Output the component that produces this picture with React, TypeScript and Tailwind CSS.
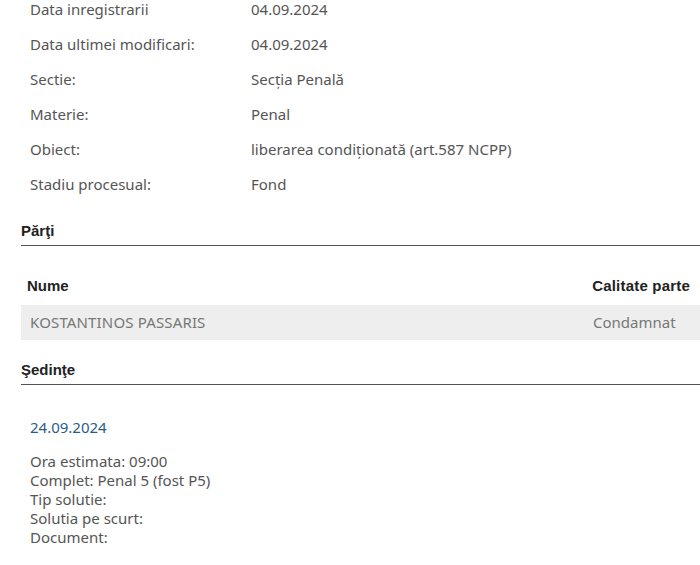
import React from "react";

const rows: [string, string][] = [
  ["Data inregistrarii", "04.09.2024"],
  ["Data ultimei modificari:", "04.09.2024"],
  ["Sectie:", "Secția Penală"],
  ["Materie:", "Penal"],
  ["Obiect:", "liberarea condiționată (art.587 NCPP)"],
  ["Stadiu procesual:", "Fond"],
];

export default function App() {
  return (
    <div className="w-[700px] h-[565px] overflow-hidden bg-white text-[#555]" style={{ fontFamily: '"Noto Sans", sans-serif' }}>
      <div className="-mt-[8px] pl-[30px] grid grid-cols-[221px_1fr] text-[15px]">
        {rows.map(([l, v]) => (
          <React.Fragment key={l}>
            <div className="h-[35px] flex items-center">{l}</div>
            <div className="h-[35px] flex items-center">{v}</div>
          </React.Fragment>
        ))}
      </div>
      <div className="pl-[21px]">
        <div className="mt-[20px] border-b border-[#555] pb-[5px] font-['Liberation_Sans',sans-serif] font-bold text-[15px] text-[#222] leading-[18px]">Părţi</div>
        <div className="mt-[31px] flex justify-between font-['Liberation_Sans',sans-serif] font-bold text-[15px] text-[#222] leading-[18px] px-[6px] pr-[10px]">
          <span>Nume</span>
          <span className="tracking-[0.2px]">Calitate parte</span>
        </div>
        <div className="mt-[10px] h-[35px] bg-[#eeeeee] flex items-center justify-between pl-[9px] pr-[7px] text-[15px] text-[#777]">
          <span className="tracking-[0.15px]">KOSTANTINOS PASSARIS</span>
          <span className="w-[100px]">Condamnat</span>
        </div>
        <div className="mt-[21px] border-b border-[#555] pb-[5px] font-['Liberation_Sans',sans-serif] font-bold text-[15px] text-[#222] leading-[18px]">Şedinţe</div>
      </div>
      <div className="pl-[30px]">
        <div className="mt-[32px] text-[15px] text-[#2b5c86] leading-[20px]">24.09.2024</div>
        <div className="mt-[15px] text-[15px] leading-[19px]">
          <div>Ora estimata: 09:00</div>
          <div>Complet: Penal 5 (fost P5)</div>
          <div>Tip solutie:</div>
          <div>Solutia pe scurt:</div>
          <div>Document:</div>
        </div>
      </div>
    </div>
  );
}
